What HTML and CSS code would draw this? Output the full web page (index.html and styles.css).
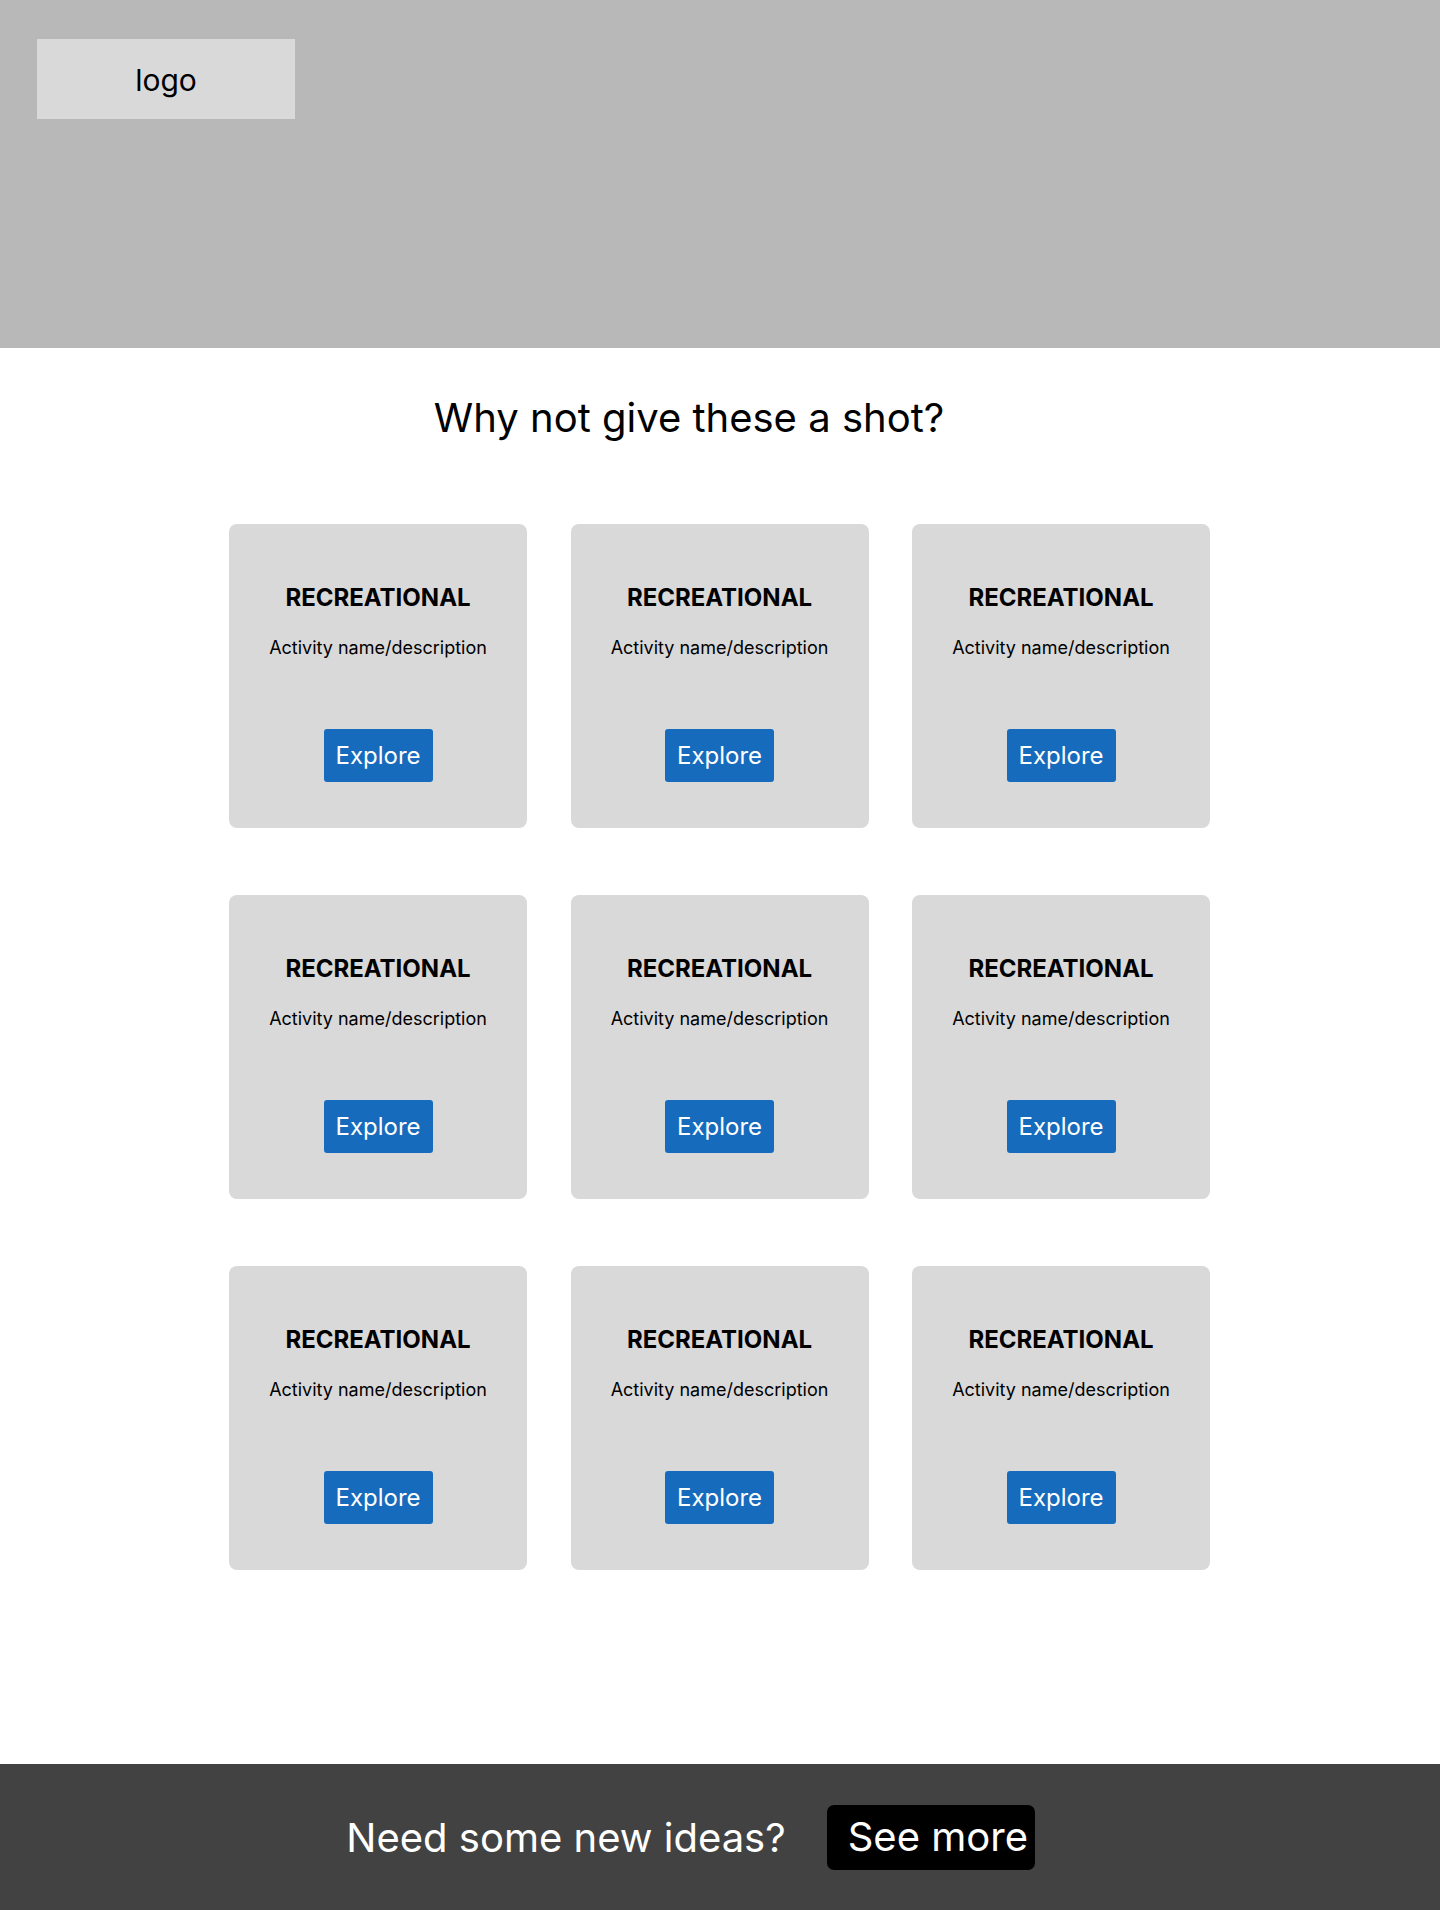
FILE: index.html
```html
<!DOCTYPE html>
<html lang="en">
<head>
<meta charset="utf-8">
<title>Activities</title>
<link rel="stylesheet" href="styles.css">
</head>
<body>
<header class="hero">
  <div class="logo">logo</div>
</header>
<main class="main">
  <h1 class="heading">Why not give these a shot?</h1>
  <div class="grid">
    <div class="card"><h2 class="card-title">RECREATIONAL</h2><p class="card-desc">Activity name/description</p><button class="btn">Explore</button></div>
    <div class="card"><h2 class="card-title">RECREATIONAL</h2><p class="card-desc">Activity name/description</p><button class="btn">Explore</button></div>
    <div class="card"><h2 class="card-title">RECREATIONAL</h2><p class="card-desc">Activity name/description</p><button class="btn">Explore</button></div>
    <div class="card"><h2 class="card-title">RECREATIONAL</h2><p class="card-desc">Activity name/description</p><button class="btn">Explore</button></div>
    <div class="card"><h2 class="card-title">RECREATIONAL</h2><p class="card-desc">Activity name/description</p><button class="btn">Explore</button></div>
    <div class="card"><h2 class="card-title">RECREATIONAL</h2><p class="card-desc">Activity name/description</p><button class="btn">Explore</button></div>
    <div class="card"><h2 class="card-title">RECREATIONAL</h2><p class="card-desc">Activity name/description</p><button class="btn">Explore</button></div>
    <div class="card"><h2 class="card-title">RECREATIONAL</h2><p class="card-desc">Activity name/description</p><button class="btn">Explore</button></div>
    <div class="card"><h2 class="card-title">RECREATIONAL</h2><p class="card-desc">Activity name/description</p><button class="btn">Explore</button></div>
  </div>
</main>
<footer class="footer">
  <span class="footer-text">Need some new ideas?</span>
  <button class="more-btn">See more</button>
</footer>
</body>
</html>
```
FILE: styles.css
```css
* { box-sizing: border-box; }
html, body { margin: 0; padding: 0; }
body {
  font-family: Inter, "Noto Sans", "Liberation Sans", sans-serif;
  color: #000;
  background: #fff;
  width: 1440px;
  min-height: 1910px;
  display: flex;
  flex-direction: column;
}
.hero {
  height: 348px;
  background: #b8b8b8;
  padding: 39px 0 0 37px;
}
.logo {
  width: 258px;
  height: 80px;
  background: #d9d9d9;
  display: flex;
  align-items: center;
  justify-content: center;
  font-size: 30px;
  padding-top: 1px;
}
.main {
  flex: 1;
  display: flex;
  flex-direction: column;
  align-items: center;
}
.heading {
  margin: 45px 62px 0 0;
  font-size: 40px;
  font-weight: 400;
  line-height: normal;
}
.grid {
  margin: 82px 1px 0 0;
  display: grid;
  grid-template-columns: repeat(3, 298px);
  column-gap: 43.5px;
  row-gap: 67px;
}
.card {
  height: 304px;
  background: #d9d9d9;
  border-radius: 8px;
  display: flex;
  flex-direction: column;
  align-items: center;
  padding-top: 59px;
}
.card-title {
  margin: 0;
  font-size: 24px;
  font-weight: 700;
  line-height: 29px;
}
.card-desc {
  margin: 25px 0 0;
  font-size: 18px;
  line-height: 22px;
}
.btn {
  margin-top: 70px;
  font-family: inherit;
  font-size: 24px;
  line-height: 29px;
  color: #fff;
  background: #176bbd;
  border: none;
  border-radius: 3px;
  padding: 12px 12px;
  width: 109px;
  height: 53px;
}
.footer {
  height: 146px;
  background: #424242;
  display: flex;
  align-items: center;
  justify-content: center;
  gap: 41px;
  padding-right: 59px;
}
.footer-text {
  color: #fff;
  font-size: 40px;
}
.more-btn {
  font-family: inherit;
  font-size: 40px;
  color: #fff;
  background: #000;
  border: none;
  border-radius: 7px;
  height: 65px;
  width: 208px;
  padding: 0 8px 2px 21px;
  text-align: left;
  white-space: nowrap;
}
```
